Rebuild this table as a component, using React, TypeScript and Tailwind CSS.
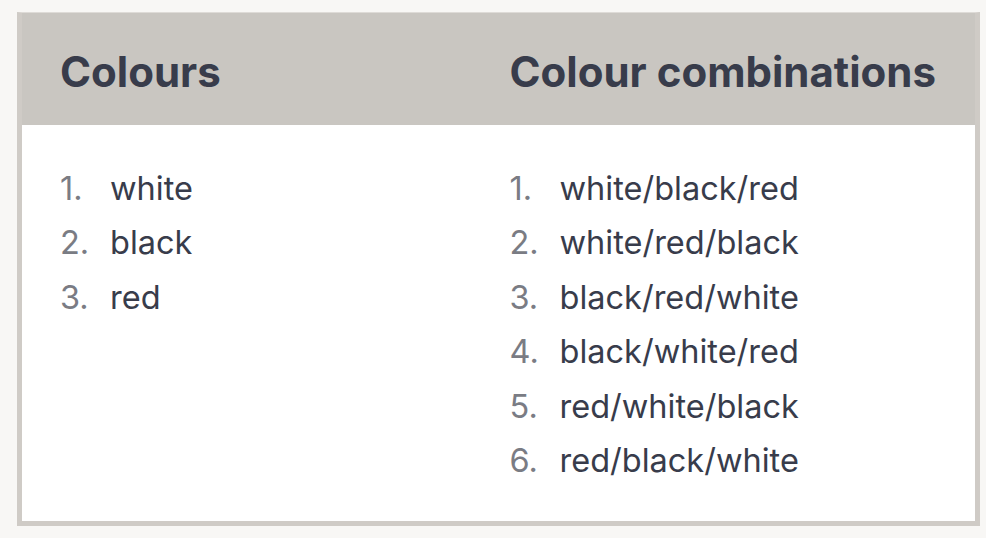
const colours = ["white", "black", "red"];

const combinations = [
  "white/black/red",
  "white/red/black",
  "black/red/white",
  "black/white/red",
  "red/white/black",
  "red/black/white",
];

const NumberedList = ({ items }: { items: string[] }) => (
  <ol className="flex flex-col">
    {items.map((item, i) => (
      <li key={item} className="flex h-[54.5px] items-center text-[32.5px]">
        <span className="w-[50px] text-[#7a7c84]">{i + 1}.</span>
        <span className="text-[#383c4b]">{item}</span>
      </li>
    ))}
  </ol>
);

export default function App() {
  return (
    <div
      className="min-h-screen w-full bg-[#f8f7f5] pt-3 pl-[17px] pr-2"
      style={{ fontFamily: "Inter, 'Open Sans', sans-serif" }}
    >
      <div className="w-[963px] border-x-[5px] border-b-[5px] border-t border-[#cfcbc6] border-t-[#dedbd7]">
        {/* Header */}
        <div className="grid h-[112px] grid-cols-2 items-center bg-[#c9c6c1] pl-[38px] pr-[16px] pt-1">
          <h2 className="text-[42px] font-bold text-[#383c4b]">Colours</h2>
          <h2 className="text-[42px] font-bold text-[#383c4b]">Colour combinations</h2>
        </div>

        {/* Body */}
        <div className="grid h-[396px] grid-cols-2 bg-white pl-[38px] pr-[16px] pt-[37px]">
          <NumberedList items={colours} />
          <NumberedList items={combinations} />
        </div>
      </div>
    </div>
  );
}
